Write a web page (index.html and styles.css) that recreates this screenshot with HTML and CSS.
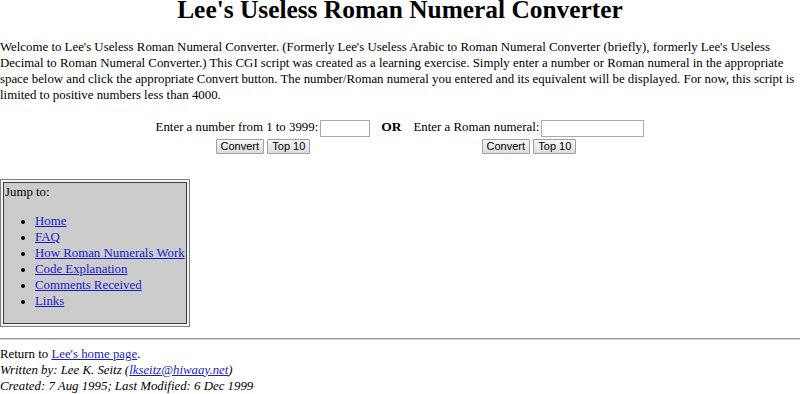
FILE: index.html
```html
<!DOCTYPE html>
<html lang="en">
<head>
    <meta charset="UTF-8">
    <title>Lee's Useless Roman Numeral Converter</title>
    <link rel="stylesheet" href="styles.css">
</head>
<body>
    <h1>Lee's Useless Roman Numeral Converter</h1>

    <p class="intro">Welcome to Lee's Useless Roman Numeral Converter. (Formerly Lee's Useless Arabic to Roman Numeral Converter (briefly), formerly Lee's Useless Decimal to Roman Numeral Converter.) This CGI script was created as a learning exercise. Simply enter a number or Roman numeral in the appropriate space below and click the appropriate Convert button. The number/Roman numeral you entered and its equivalent will be displayed. For now, this script is limited to positive numbers less than 4000.</p>

    <table class="converter">
        <tr>
            <td class="cell">
                <form>
                    Enter a number from 1 to 3999:<input type="text" class="num-input"><br>
                    <button type="button">Convert</button>
                    <button type="button">Top 10</button>
                </form>
            </td>
            <td class="or">OR</td>
            <td class="cell">
                <form>
                    Enter a Roman numeral:<input type="text" class="roman-input"><br>
                    <button type="button">Convert</button>
                    <button type="button">Top 10</button>
                </form>
            </td>
        </tr>
    </table>

    <table class="jump">
        <tr>
            <td class="jump-cell">
                Jump to:
                <ul>
                    <li><a href="#">Home</a></li>
                    <li><a href="#">FAQ</a></li>
                    <li><a href="#">How Roman Numerals Work</a></li>
                    <li><a href="#">Code Explanation</a></li>
                    <li><a href="#">Comments Received</a></li>
                    <li><a href="#">Links</a></li>
                </ul>
            </td>
        </tr>
    </table>

    <hr>

    <div class="footer">
        Return to <a href="#">Lee's home page</a>.<br>
        <address>
            Written by: Lee K. Seitz (<a href="#">lkseitz@hiwaay.net</a>)<br>
            Created: 7 Aug 1995; Last Modified: 6 Dec 1999
        </address>
    </div>
</body>
</html>
```

FILE: styles.css
```css
body {
    font-family: 'Liberation Serif', 'Times New Roman', serif;
    font-size: 12.85px;
    line-height: 16px;
    color: #000;
    background-color: #fff;
    margin: 0;
    padding: 0;
}

a {
    color: #1a1acc;
}

h1 {
    text-align: center;
    font-size: 25.4px;
    line-height: 30px;
    margin: -6px 0 0;
}

.intro {
    margin: 15px 0 0;
}

.converter {
    margin: 16px auto 0;
    border-collapse: collapse;
}

.converter td {
    padding: 0;
    vertical-align: top;
    text-align: center;
}

.converter form {
    margin: 0;
}

.converter .or {
    font-weight: bold;
    font-size: 13.5px;
    padding: 0 12px 0 11px;
}

input {
    height: 17px;
    box-sizing: border-box;
    border: 1px solid #a9a9a9;
    padding: 0 2px;
    vertical-align: middle;
    margin: 0 0 0 2px;
}

.num-input {
    width: 50px;
}

.roman-input {
    width: 103px;
}

button {
    font-family: 'Liberation Sans', Arial, sans-serif;
    font-size: 11px;
    height: 15px;
    line-height: 13px;
    padding: 0 4px;
    margin-top: 2px;
    border: 1px solid #a0a0a0;
    border-radius: 1px;
    background: linear-gradient(#f6f6f6, #dddddd);
    color: #000;
}

.jump {
    margin-top: 25px;
    border: 1px solid #808080;
    border-spacing: 2px;
    background-color: #f2f2f2;
}

.jump-cell {
    border: 1px solid #404040;
    background-color: #cccccc;
    padding: 1px;
}

.jump ul {
    margin: 13px 0;
    padding-left: 30px;
}

hr {
    margin: 11px 0 0;
    border: none;
    border-top: 1px solid #9a9a9a;
    border-bottom: 1px solid #d0d0d0;
}

.footer {
    margin-top: 6px;
}

address {
    font-style: italic;
}
```
